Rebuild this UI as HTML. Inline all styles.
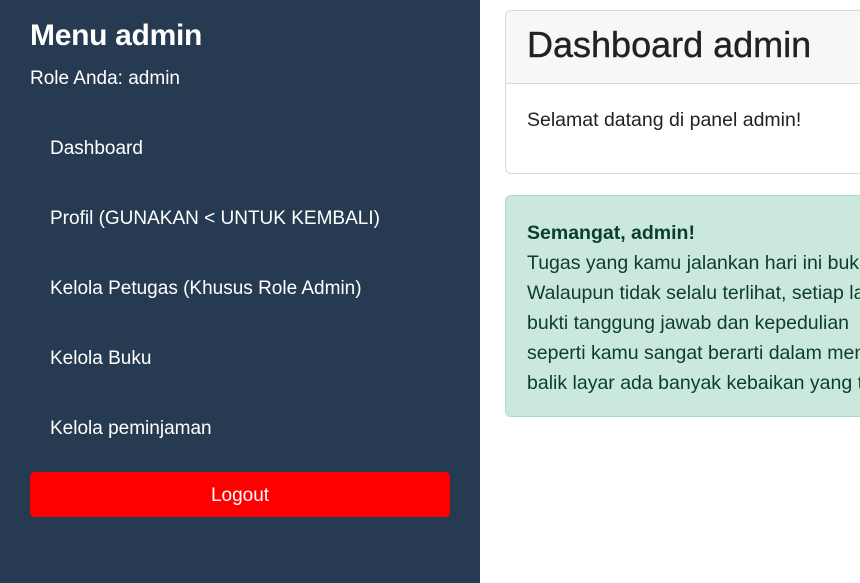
<!DOCTYPE html>
<html><head><meta charset="utf-8"><style>
*{box-sizing:border-box;margin:0;padding:0}
html,body{width:860px;height:583px;overflow:hidden;background:#fff;font-family:"Liberation Sans",sans-serif;}
.wrap{position:relative;width:860px;height:583px;overflow:hidden}
.side{position:absolute;left:0;top:0;width:480px;height:583px;background:#263b52;color:#fff}
.side h1{position:absolute;left:30px;top:18px;font-size:30px;font-weight:bold;line-height:36px;letter-spacing:-0.3px}
.role{position:absolute;left:30px;top:67px;font-size:19px;line-height:24px}
.item{position:absolute;left:50px;font-size:19px;line-height:24px;white-space:nowrap}
.btn{position:absolute;left:30px;top:472px;width:420px;height:45px;background:#f00;border-radius:5px;color:#fff;font-size:19px;text-align:center;line-height:48px}
.card{position:absolute;left:505px;top:10px;width:355px;height:164px;border:1px solid #d9d9d9;border-right:none;border-radius:6px 0 0 6px;overflow:hidden}
.ch{height:73px;background:#f7f7f7;border-bottom:1px solid #d9d9d9;padding-left:21px;font-size:36px;line-height:68px;color:#222;white-space:nowrap;-webkit-text-stroke:0.4px #222}
.cb{padding:21px 21px;font-size:19.5px;line-height:30px;color:#222;white-space:nowrap}
.alert{position:absolute;left:505px;top:195px;width:355px;height:222px;background:#cbe8dc;border:1px solid #a6dcc4;border-right:none;border-radius:6px 0 0 6px;padding:22px 21px;color:#0b3d2b;font-size:19.5px;line-height:30px;white-space:nowrap;overflow:hidden}
</style></head><body><div class="wrap">
<div class="side">
<h1>Menu admin</h1>
<div class="role">Role Anda: admin</div>
<div class="item" style="top:137px">Dashboard</div>
<div class="item" style="top:207px">Profil (GUNAKAN &lt; UNTUK KEMBALI)</div>
<div class="item" style="top:277px">Kelola Petugas (Khusus Role Admin)</div>
<div class="item" style="top:347px">Kelola Buku</div>
<div class="item" style="top:417px">Kelola peminjaman</div>
<div class="btn">Logout</div>
</div>
<div class="card"><div class="ch">Dashboard admin</div><div class="cb">Selamat datang di panel admin!</div></div>
<div class="alert"><b>Semangat, admin!</b><br>Tugas yang kamu jalankan hari ini bukan<br>Walaupun tidak selalu terlihat, setiap langkah<br>bukti tanggung jawab dan kepedulian<br>seperti kamu sangat berarti dalam menjaga<br>balik layar ada banyak kebaikan yang tumbuh</div>
</div></body></html>
